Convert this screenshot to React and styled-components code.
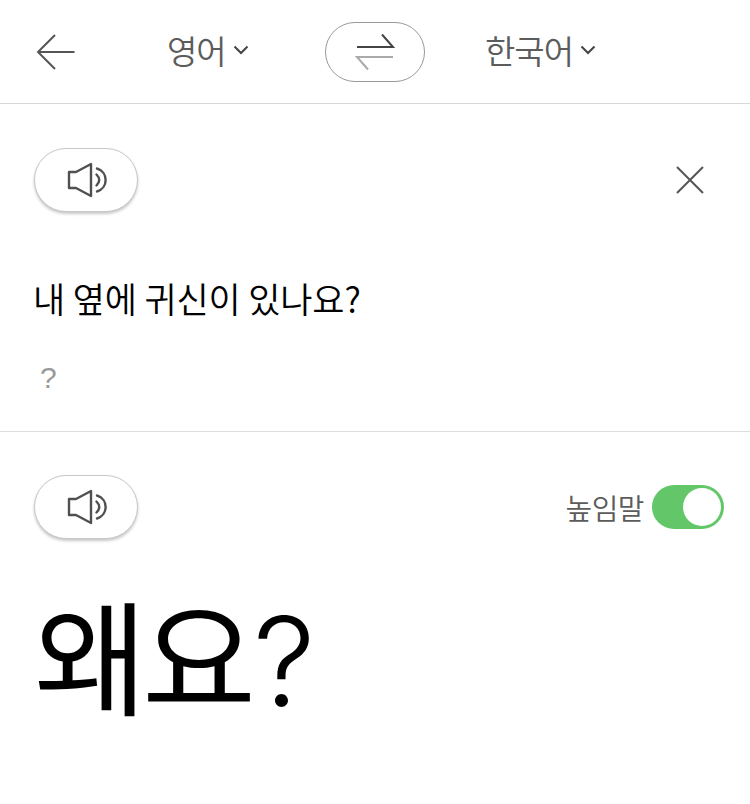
import styled, { createGlobalStyle } from "styled-components";

const GlobalStyle = createGlobalStyle`
  html, body {
    margin: 0;
    padding: 0;
    background: #fff;
    font-family: "Noto Sans CJK KR", sans-serif;
  }
`;

const Page = styled.div`
  width: 750px;
  height: 804px;
  overflow: hidden;
  background: #fff;
`;

const Header = styled.header`
  display: grid;
  grid-template-columns: 167px 158px 100px 60px auto;
  align-items: center;
  height: 103px;
  border-bottom: 1px solid #d8d8d8;
`;

const BackButton = styled.div`
  display: flex;
  padding-left: 36px;
  color: #555;
`;

const LangPicker = styled.div`
  display: flex;
  align-items: center;
  gap: 7px;
  grid-column: ${(p) => p.$col};
  padding-bottom: 4px;
  font-size: 33px;
  line-height: 44px;
  font-weight: 350;
  letter-spacing: -1px;
  color: #5c5c5c;
`;

const SwapButton = styled.div`
  display: flex;
  align-items: center;
  justify-content: center;
  width: 100px;
  height: 60px;
  box-sizing: border-box;
  border: 1px solid #999;
  border-radius: 30px;
`;

const Source = styled.section`
  height: 328px;
  box-sizing: border-box;
  padding: 44px 45px 0 34px;
  border-bottom: 1px solid #ddd;
`;

const Target = styled.section`
  padding: 43px 26px 0 34px;
`;

const ActionRow = styled.div`
  display: flex;
  align-items: center;
  justify-content: space-between;
`;

const SpeakButton = styled.div`
  display: flex;
  align-items: center;
  justify-content: center;
  width: 104px;
  height: 64px;
  box-sizing: border-box;
  background: #fff;
  border: 1px solid #c8c8c8;
  border-radius: 32px;
  box-shadow: 0 2px 3px rgba(0, 0, 0, 0.22);
`;

const SourceText = styled.p`
  margin: 62px 0 0 -1px;
  font-size: 35px;
  line-height: 48px;
  font-weight: 350;
  letter-spacing: -0.15px;
  color: #000;
`;

const Hint = styled.p`
  margin: 34px 0 0 6px;
  font-family: "Liberation Sans", sans-serif;
  font-size: 30px;
  line-height: 44px;
  color: #999;
`;

const Formal = styled.div`
  display: flex;
  align-items: center;
  gap: 8px;
  font-size: 29px;
  font-weight: 350;
  letter-spacing: -0.5px;
  color: #5c5c5c;
`;

const Toggle = styled.div`
  display: flex;
  justify-content: flex-end;
  align-items: center;
  width: 72px;
  height: 44px;
  box-sizing: border-box;
  padding: 3px;
  background: #63c76a;
  border-radius: 22px;
`;

const Knob = styled.div`
  width: 38px;
  height: 38px;
  background: #fff;
  border-radius: 50%;
`;

const Result = styled.p`
  margin: 28px 0 0;
  font-size: 124px;
  line-height: 170px;
  font-weight: 400;
  letter-spacing: -6px;
  color: #000;
`;

const Question = styled.span`
  margin-left: 3px;
  font-family: Inter, sans-serif;
  font-size: 124px;
  font-weight: 350;
  letter-spacing: 0;
`;

const Speaker = () => (
  <svg width="44" height="36" viewBox="0 0 44 36" fill="none" stroke="#505050" strokeWidth="2.4" strokeLinejoin="round" strokeLinecap="round">
    <path d="M5 10h7L27 2v32L12 26H5z" />
    <path d="M32.500 12.500Q38 18 32.500 23.500" />
    <path d="M33 6.500C44.500 10 44.500 26 33 29.500" />
  </svg>
);

const Chevron = () => (
  <svg width="16" height="10" viewBox="0 0 16 10" fill="none" stroke="#444" strokeWidth="2">
    <path d="M1.500 1.500 8 8l6.500-6.500" />
  </svg>
);

export default function App() {
  return (
    <Page>
      <GlobalStyle />
      <Header>
        <BackButton>
          <svg width="40" height="38" viewBox="0 0 40 38" fill="none" stroke="#555" strokeWidth="2">
            <path d="M38.500 19H2M19 2 2 19l17 17" />
          </svg>
        </BackButton>
        <LangPicker $col={2}>
          영어
          <Chevron />
        </LangPicker>
        <SwapButton>
          <svg width="40" height="38" viewBox="0 0 40 38" fill="none">
            <path d="M2 14h36L27 1.500" stroke="#444" strokeWidth="2" />
            <path d="M38 24H2l11 12.500" stroke="#aaa" strokeWidth="2" />
          </svg>
        </SwapButton>
        <LangPicker $col={5}>
          한국어
          <Chevron />
        </LangPicker>
      </Header>
      <Source>
        <ActionRow>
          <SpeakButton>
            <Speaker />
          </SpeakButton>
          <svg width="30" height="30" viewBox="0 0 30 30" fill="none" stroke="#555" strokeWidth="2">
            <path d="M2 2l26 26M28 2 2 28" />
          </svg>
        </ActionRow>
        <SourceText>내 옆에 귀신이 있나요?</SourceText>
        <Hint>?</Hint>
      </Source>
      <Target>
        <ActionRow>
          <SpeakButton>
            <Speaker />
          </SpeakButton>
          <Formal>
            높임말
            <Toggle>
              <Knob />
            </Toggle>
          </Formal>
        </ActionRow>
        <Result>
          왜요<Question>?</Question>
        </Result>
      </Target>
    </Page>
  );
}
